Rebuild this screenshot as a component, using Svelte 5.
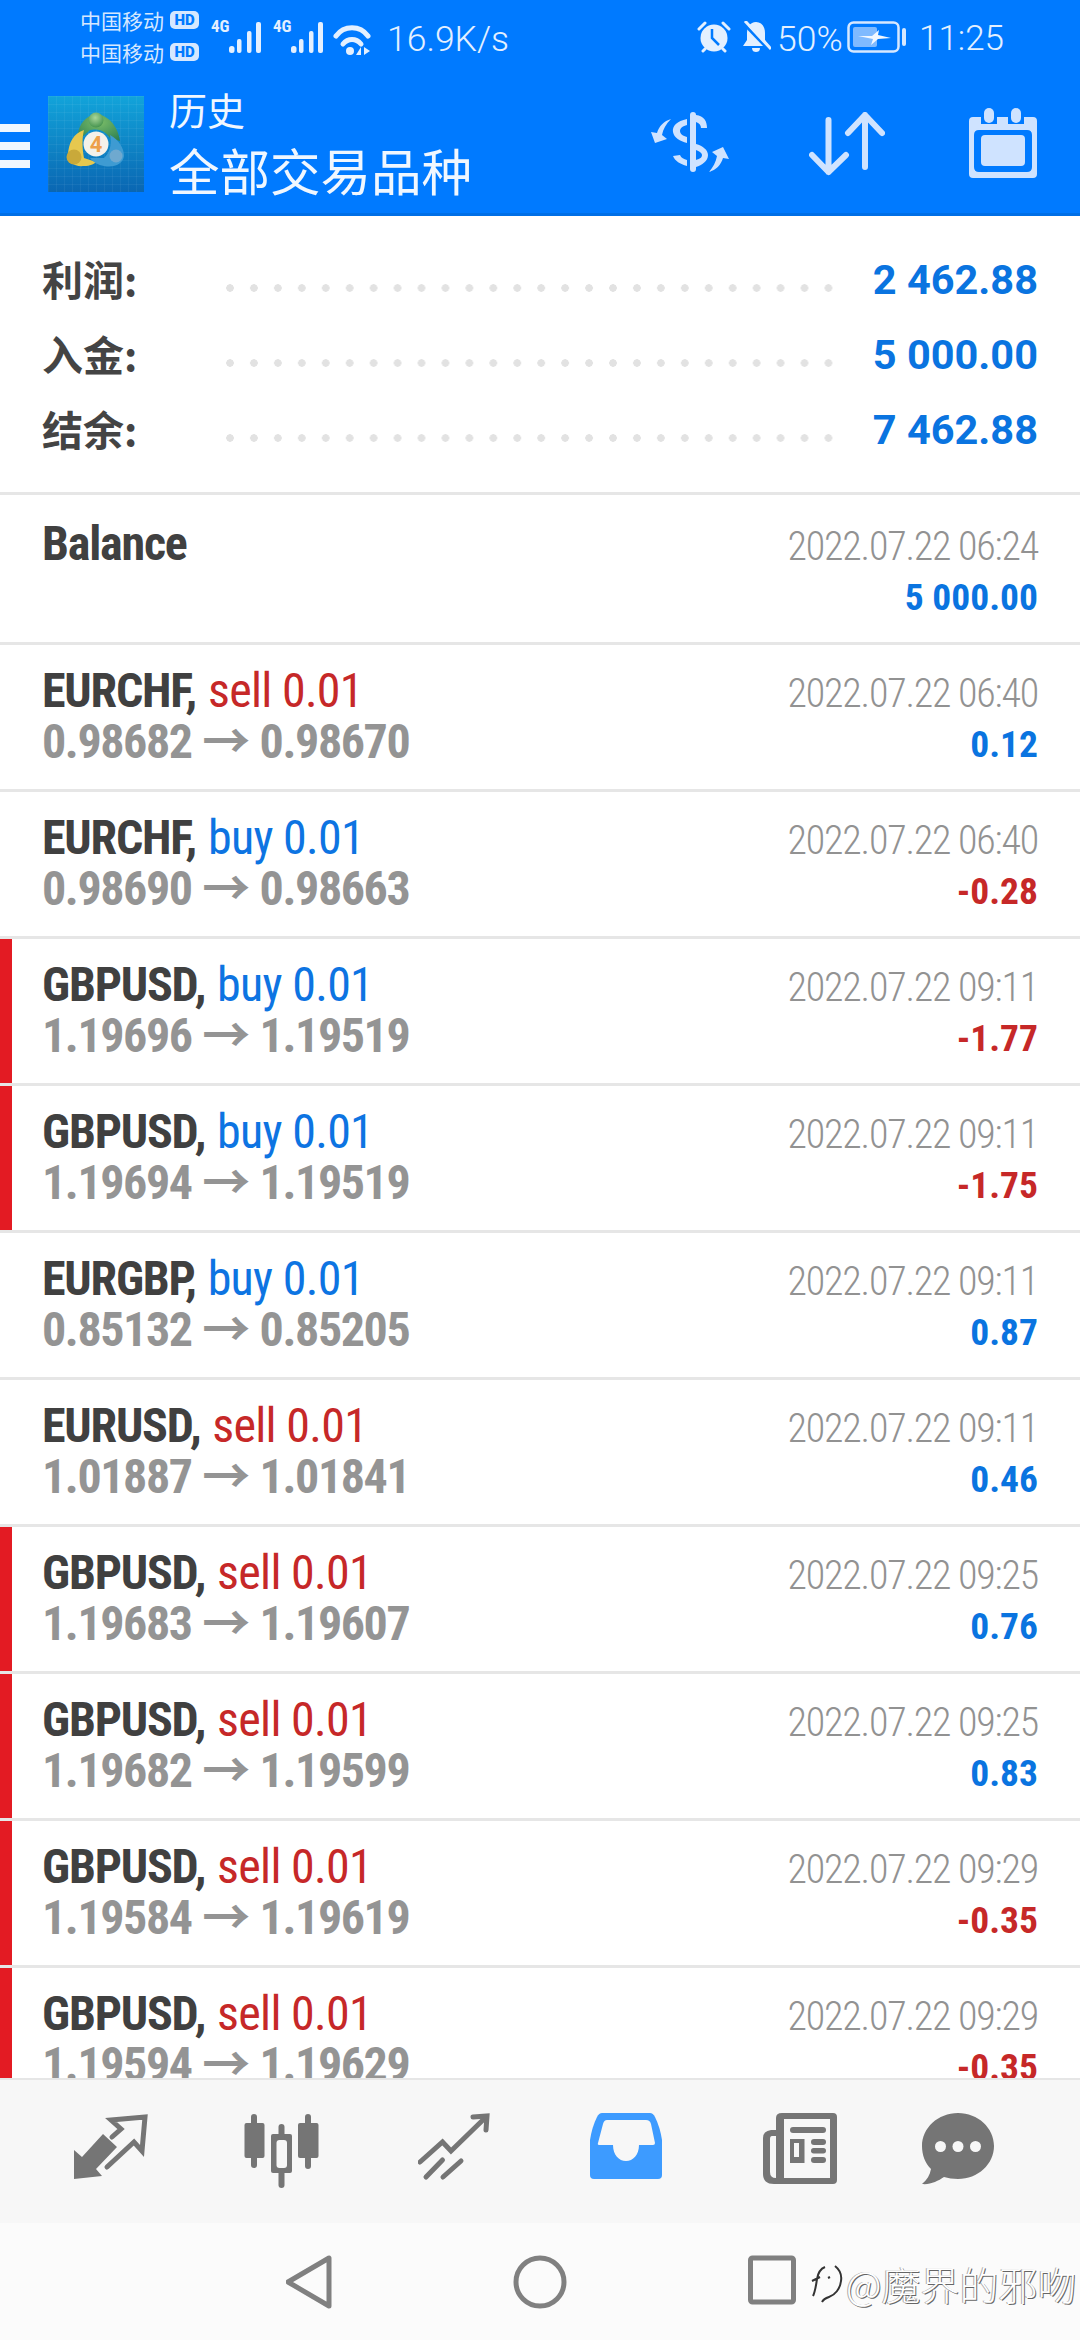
<script>
  const summary = [
    { label: '利润:', value: '2 462.88' },
    { label: '入金:', value: '5 000.00' },
    { label: '结余:', value: '7 462.88' }
  ];

  const rows = [
    ['EURCHF', 'sell', '0.98682', '0.98670', '06:40', '0.12', false],
    ['EURCHF', 'buy', '0.98690', '0.98663', '06:40', '-0.28', false],
    ['GBPUSD', 'buy', '1.19696', '1.19519', '09:11', '-1.77', true],
    ['GBPUSD', 'buy', '1.19694', '1.19519', '09:11', '-1.75', true],
    ['EURGBP', 'buy', '0.85132', '0.85205', '09:11', '0.87', false],
    ['EURUSD', 'sell', '1.01887', '1.01841', '09:11', '0.46', false],
    ['GBPUSD', 'sell', '1.19683', '1.19607', '09:25', '0.76', true],
    ['GBPUSD', 'sell', '1.19682', '1.19599', '09:25', '0.83', true],
    ['GBPUSD', 'sell', '1.19584', '1.19619', '09:29', '-0.35', true],
    ['GBPUSD', 'sell', '1.19594', '1.19629', '09:29', '-0.35', true]
  ];
</script>

<div class="phone">
  <header class="header">
    <div class="status">
      <div class="carriers">
        <div class="carrier">中国移动<span class="hd">HD</span></div>
        <div class="carrier">中国移动<span class="hd">HD</span></div>
      </div>
      {#each [0, 1] as s}
        <span class="net">4G</span>
        <svg class="signal" width="33" height="32" viewBox="0 0 33 32">
          <rect x="0" y="24" width="5.500" height="7" rx="2.500" />
          <rect x="8" y="17" width="4.500" height="14" rx="2" />
          <rect x="18" y="9" width="4.500" height="22" rx="2" />
          <rect x="27" y="0" width="5" height="31" rx="2" />
        </svg>
      {/each}
      <svg class="wifi" width="38" height="34" viewBox="0 0 38 34">
        <path d="M3 14 C11 3 27 3 35 14" />
        <path d="M10 22 C15 16 23 16 28 22" />
        <circle class="solid" cx="17" cy="29" r="4" />
        <path class="solid" d="M28 25 V33 L23 33 Z M31 25 V33 L37 29 Z" />
      </svg>
      <span class="speed">16.9K/s</span>
      <svg class="alarm" width="34" height="34" viewBox="0 0 34 34">
        <circle cx="17" cy="18" r="13.500" class="face" />
        <path class="hand" d="M15 9 V18 L22 25" />
        <path class="ear" d="M2 9 L8 3 M32 9 L26 3 M6 31 L8 29 M28 31 L26 29" />
      </svg>
      <svg class="bell" width="30" height="32" viewBox="0 0 30 32">
        <path class="face" d="M15 1 C21 1 24 6 24 12 V19 L28 25 H2 L6 19 V12 C6 6 9 1 15 1 Z" />
        <path class="face" d="M11 27 H19 C19 30 17 31 15 31 C13 31 11 30 11 27 Z" />
        <path class="gap" d="M2 2 L29 30" />
        <path class="slash" d="M4 0 L30 28" />
      </svg>
      <span class="pct">50%</span>
      <svg class="battery" width="60" height="33" viewBox="0 0 60 33">
        <rect x="1.500" y="1.500" width="50" height="29" rx="5" class="shell" />
        <rect x="6" y="6" width="24" height="20" rx="2" class="level" />
        <path class="bolt" d="M11 15 L25 15 L32 9 L31 14 L44 17 L31 18 L24 24 L26 18 Z" />
        <rect x="55" y="7" width="4" height="18" rx="2" class="nub" />
      </svg>
      <span class="clock">11:25</span>
    </div>

    <div class="toolbar">
      <div class="menu"><i></i><i></i><i></i></div>
      <svg class="logo" width="96" height="96" viewBox="0 0 96 96">
        <defs>
          <linearGradient id="sky" x1="0" y1="0" x2="0" y2="1">
            <stop offset="0" stop-color="#12a4da" />
            <stop offset="1" stop-color="#0a66b2" />
          </linearGradient>
          <pattern id="grid" width="8" height="8" patternUnits="userSpaceOnUse">
            <path d="M8 0 H0 V8" fill="none" stroke="#ffffff" stroke-opacity="0.1" stroke-width="1" />
          </pattern>
          <radialGradient id="leaf-g" cx="0.5" cy="0.3" r="0.8">
            <stop offset="0" stop-color="#7bbd68" />
            <stop offset="1" stop-color="#2c7f52" />
          </radialGradient>
          <radialGradient id="ball-g" cx="0.45" cy="0.35" r="0.7">
            <stop offset="0" stop-color="#a9d79a" />
            <stop offset="1" stop-color="#3f8f4a" />
          </radialGradient>
        </defs>
        <rect width="96" height="96" fill="url(#sky)" />
        <rect width="96" height="96" fill="url(#grid)" />
        <path d="M48 18 C60 19 70 30 72 45 L62 42 C58 35 50 32 42 34 L33 42 L30 38 C31 28 38 20 48 18 Z" fill="url(#leaf-g)" />
        <circle cx="48" cy="24" r="7.500" fill="url(#ball-g)" />
        <path d="M36 34 C26 37 20 47 20 60 C20 66 26 71 36 70 C42 70 46 68 48 66 L36 62 C34 52 34 42 36 34 Z" fill="#e6c84f" />
        <circle cx="26" cy="61" r="7.500" fill="#c9a93a" />
        <path d="M62 39 C71 44 76 52 76 60 C75 68 66 72 56 70 C50 69 45 66 42 62 L56 62 C62 56 64 48 62 39 Z" fill="#3e9bd2" />
        <circle cx="68" cy="60" r="6.500" fill="#6fa9cf" />
        <circle cx="48" cy="48" r="12.500" fill="#f4f1ea" />
        <text x="48" y="56" class="logo-4">4</text>
      </svg>
      <div class="titles">
        <div class="title-top">历史</div>
        <div class="title-main">全部交易品种</div>
      </div>
      <svg class="swap" width="80" height="60" viewBox="0 0 80 60">
        <rect x="40" y="0" width="6" height="60" rx="3" />
        <path d="M46 3 C54 4 57 9 57 16 L51 16 C51 13 49 11 46 10 Z" />
        <path d="M37 7 C27 9 22 14 23 20 C24 26 30 29 37 31 L37 25 C33 24 30 22 30 19 C30 16 33 14 37 13 Z" />
        <path d="M46 32 C53 34 58 38 58 43 C58 49 52 53 46 55 L46 48 C49 47 52 46 52 43 C52 41 49 39 46 38 Z" />
        <path d="M37 54 C30 52 25 49 23 44 L30 43 C31 46 34 47 37 48 Z" />
        <path d="M21 7 C14 9 9 14 7 21 L1 20 L5 31 L17 27 L12 23 C13 17 16 12 21 7 Z" />
        <path d="M59 60 C66 58 71 53 73 46 L79 47 L73 35 L62 40 L67 44 C66 50 63 55 59 60 Z" />
      </svg>
      <svg class="sort" width="76" height="64" viewBox="808 112 76 64">
        <path d="M827.500 120 V172 M811 155 L827.500 172 L845 155" />
        <path d="M864 167 V115 M847 133 L864 115 L881 133" />
      </svg>
      <svg class="calendar" width="68" height="70" viewBox="968 108 68 70">
        <path class="frame" fill-rule="evenodd" d="M972 117 H1032 Q1036 117 1036 121 V174 Q1036 178 1032 178 H972 Q968 178 968 174 V121 Q968 117 972 117 Z M978 130 Q973 130 973 135 V167 Q973 172 978 172 H1026 Q1031 172 1031 167 V135 Q1031 130 1026 130 Z" />
        <rect class="frame" x="980" y="135" width="44" height="31" rx="4" />
        <rect class="peg-gap" x="980" y="115" width="16" height="9" />
        <rect class="peg-gap" x="1007" y="115" width="16" height="9" />
        <rect class="frame" x="983" y="108" width="10" height="15" rx="5" />
        <rect class="frame" x="1010" y="108" width="10" height="15" rx="5" />
      </svg>
    </div>
  </header>

  <main class="content">
    <section class="summary">
      {#each summary as item}
        <div class="sum-row">
          <span class="sum-label">{item.label}</span>
          <span class="dots"></span>
          <span class="sum-value">{item.value}</span>
        </div>
      {/each}
    </section>

    <div class="row head">
      <div class="left"><div class="sym">Balance</div></div>
      <div class="right">
        <div class="date">2022.07.22 06:24</div>
        <div class="val pos">5 000.00</div>
      </div>
    </div>

    {#each rows as [sym, side, from, to, time, val, flagged]}
      <div class="row" class:flagged>
        <div class="left">
          <div class="sym">{sym}, <span class={side}>{side} 0.01</span></div>
          <div class="price">{from} → {to}</div>
        </div>
        <div class="right">
          <div class="date">2022.07.22 {time}</div>
          <div class="val" class:neg={val.startsWith('-')} class:pos={!val.startsWith('-')}>{val}</div>
        </div>
      </div>
    {/each}
  </main>

  <nav class="tabs">
    <svg width="76" height="70" viewBox="72 2116 76 70">
      <path class="fill" d="M74 2182 V2153 L82 2160 L103 2137 L117 2150 L96 2172 L102 2179 Z" />
      <path class="line" d="M112 2140 L121 2132 L111 2123 L145 2120 L142 2154 L134 2145 L107 2170" />
    </svg>
    <svg width="76" height="76" viewBox="244 2112 76 76">
      <rect class="fill" x="244.500" y="2122" width="20" height="35" rx="2" />
      <rect class="fill" x="251" y="2113" width="6" height="54" rx="3" />
      <rect class="fill" x="271" y="2133" width="21" height="39" rx="2" />
      <rect class="fill" x="278.500" y="2123" width="6" height="64" rx="3" />
      <rect class="hole" x="276.500" y="2139" width="10.500" height="28" rx="3" />
      <rect class="fill" x="298" y="2122" width="20.500" height="35" rx="2" />
      <rect class="fill" x="305" y="2113" width="6" height="55" rx="3" />
    </svg>
    <svg class="t3" width="72" height="68" viewBox="418 2115 72 68">
      <path class="line" d="M420 2164 L442.500 2144 L451 2153 L486 2119" />
      <path class="line" d="M473 2119 L487 2118 L486 2132" />
      <path class="line" d="M426 2179 L442.500 2162 M443 2179 L461 2163" />
    </svg>
    <svg class="t4" width="72" height="66" viewBox="590 2116 72 66">
      <path class="active" d="M602 2116 H650 Q653 2116 655 2120 Q660 2130 662 2143 V2178 Q662 2182 658 2182 H594 Q590 2182 590 2178 V2143 Q592 2130 597 2120 Q599 2116 602 2116 Z" />
      <path class="hole" d="M607 2123 H646 Q650 2123 651 2127 L655 2146 Q655 2148 653 2148 H639 C639 2158 633 2164 626 2164 C619 2164 613 2158 613 2148 H600 Q597 2148 598 2146 L603 2127 Q604 2123 607 2123 Z" />
    </svg>
    <svg class="t5" width="74" height="72" viewBox="763 2113 74 72">
      <path class="fill" fill-rule="evenodd" d="M782 2113 H833 Q837 2113 837 2117 V2180 Q837 2184 833 2184 H774 Q763 2184 763 2174 V2138 Q763 2131 771 2130 L776 2130 V2118 Q776 2113 782 2113 Z M784 2119 V2178 H830 V2119 Z M776 2136 H772 Q770 2136 770 2139 V2172 Q770 2178 776 2178 Z" />
      <rect class="fill" x="790" y="2127" width="36" height="6" rx="3" />
      <path class="fill" fill-rule="evenodd" d="M790 2139 H804.500 V2163 H790 Z M794 2143 V2157 H799 V2143 Z" />
      <rect class="fill" x="811" y="2139" width="15" height="6" rx="3" />
      <rect class="fill" x="811" y="2148" width="15" height="5.500" rx="2.700" />
      <rect class="fill" x="811" y="2157" width="15" height="6" rx="3" />
    </svg>
    <svg class="chat" width="74" height="72" viewBox="921 2113 74 72">
      <path class="fill" d="M958 2113 C978 2113 994 2128 994 2146 C994 2164 978 2179 958 2179 C953 2179 948 2178 944 2177 C938 2181 930 2185 922 2184 C927 2180 930 2175 931 2169 C925 2163 922 2155 922 2146 C922 2128 938 2113 958 2113 Z" />
      <circle class="hole" cx="940.500" cy="2146.500" r="5.500" />
      <circle class="hole" cx="958" cy="2146.500" r="5.500" />
      <circle class="hole" cx="975.500" cy="2146.500" r="5.500" />
    </svg>
  </nav>

  <footer class="sysnav">
    <svg width="46" height="54" viewBox="286 2255 46 54">
      <path d="M288 2282 L329 2258 V2306 Z" />
    </svg>
    <svg width="54" height="54" viewBox="513 2255 54 54">
      <circle cx="540" cy="2282" r="24" />
    </svg>
    <svg width="48" height="50" viewBox="745 2257 48 50">
      <rect x="747.500" y="2260" width="43" height="44" rx="2" />
    </svg>
    <div class="mark">
      <svg class="mark-logo" width="32" height="44" viewBox="0 0 32 44">
        <path d="M14 6 C9 8 7 12 6 18 C5 25 4 31 2 35 M1 20 L9 16 M24 5 C29 9 31 14 30 20 C29 28 24 34 18 36 C15 37 12 39 11 41 M17 17 L19 16" />
      </svg>
      <span>@魔界的邪吻</span>
    </div>
  </footer>
</div>

<style>
  :global(body) {
    margin: 0;
    background: #fff;
  }

  .phone {
    position: relative;
    width: 1080px;
    height: 2340px;
    display: flex;
    flex-direction: column;
    overflow: hidden;
    font-family: Roboto, "Noto Sans CJK SC", sans-serif;
  }

  .header {
    height: 213px;
    flex-shrink: 0;
    background: #007aff;
    border-bottom: 3px solid #006fe6;
    color: #fff;
  }

  .status {
    height: 70px;
    display: flex;
    align-items: center;
    padding-left: 80px;
    color: #e4f0ff;
  }

  .carriers {
    width: 131px;
    margin-top: 2px;
  }

  .carrier {
    display: flex;
    align-items: center;
    height: 32px;
    font-size: 21px;
    font-family: "Noto Sans CJK SC", sans-serif;
    color: #d6e8ff;
  }

  .hd {
    margin-left: 6px;
    width: 29px;
    height: 18px;
    line-height: 18px;
    border-radius: 5px;
    background: #d6e8ff;
    color: #007aff;
    font-family: Roboto, sans-serif;
    font-weight: 900;
    font-size: 15px;
    text-align: center;
  }

  .net {
    width: 18px;
    margin: -18px 0 0 0;
    font-size: 17px;
    font-weight: 700;
    font-stretch: 75%;
    color: #e4f0ff;
  }

  .signal {
    fill: #e4f0ff;
    margin: 6px 11px 0 0;
  }

  .wifi {
    margin: 8px 0 0 -2px;
    fill: none;
    stroke: #e4f0ff;
    stroke-width: 5;
    stroke-linecap: round;
  }

  .wifi .solid {
    fill: #e4f0ff;
    stroke: none;
  }

  .speed {
    margin-left: 16px;
    width: 310px;
    font-size: 35.500px;
    font-weight: 300;
    line-height: 40px;
    margin-top: 8px;
  }

  .alarm {
    margin-top: 4px;
  }

  .alarm .face,
  .bell .face {
    fill: #e4f0ff;
  }

  .alarm .hand {
    fill: none;
    stroke: #007aff;
    stroke-width: 2.500;
  }

  .alarm .ear {
    stroke: #e4f0ff;
    stroke-width: 3;
    stroke-linecap: round;
  }

  .bell {
    margin: 4px 0 0 10px;
  }

  .bell .gap {
    stroke: #007aff;
    stroke-width: 3;
  }

  .bell .slash {
    stroke: #e4f0ff;
    stroke-width: 3;
  }

  .pct {
    margin: 8px 0 0 6px;
    width: 70px;
    font-size: 35.500px;
    font-weight: 300;
    line-height: 40px;
  }

  .battery {
    margin-top: 5px;
  }

  .battery .shell {
    fill: none;
    stroke: #d6e8ff;
    stroke-width: 2.500;
  }

  .battery .level {
    fill: #7fbaff;
  }

  .battery .bolt {
    fill: #f2f8ff;
  }

  .battery .nub {
    fill: #d6e8ff;
  }

  .clock {
    margin: 8px 0 0 12px;
    font-size: 35px;
    font-weight: 300;
    line-height: 40px;
  }

  .toolbar {
    height: 143px;
    display: flex;
    align-items: center;
  }

  .menu {
    width: 30px;
    display: flex;
    flex-direction: column;
    gap: 10px;
    margin-top: 9px;
  }

  .menu i {
    display: block;
    height: 8px;
    background: #f0f7ff;
  }

  .logo {
    margin: 5px 0 0 18px;
  }

  .titles {
    margin: -1px 0 0 25px;
    width: 481px;
    font-family: "Noto Sans CJK SC", sans-serif;
    color: #f0f7ff;
  }

  .title-top {
    font-size: 38px;
    line-height: 56px;
  }

  .title-main {
    font-size: 50.500px;
    line-height: 64px;
  }

  .logo-4 {
    font-size: 22px;
    font-weight: 700;
    fill: #eda04a;
    text-anchor: middle;
  }

  .swap {
    fill: #cfe3ff;
    margin-top: 1px;
  }

  .sort {
    margin: 5px 0 0 79px;
    fill: none;
    stroke: #cfe3ff;
    stroke-width: 6;
    stroke-linecap: round;
    stroke-linejoin: round;
  }

  .calendar {
    margin: 3px 0 0 84px;
  }

  .calendar .frame {
    fill: #cfe3ff;
  }

  .calendar .peg-gap {
    fill: #007aff;
  }

  .content {
    flex: 1;
    min-height: 0;
    overflow: hidden;
  }

  .summary {
    height: 279px;
    box-sizing: border-box;
    border-bottom: 3px solid #e6e6e6;
    padding: 26px 42px 0 42px;
  }

  .sum-row {
    display: flex;
    align-items: center;
    height: 75px;
  }

  .sum-label {
    width: 184px;
    margin-top: -3px;
    font-family: "Noto Sans CJK SC", sans-serif;
    font-weight: 700;
    font-size: 41px;
    color: #444;
  }

  .dots {
    width: 607px;
    height: 8px;
    margin-top: 16px;
    background-image: radial-gradient(circle at 4px 4px, #e2e2e2 3.500px, transparent 4px);
    background-size: 23.950px 8px;
    background-repeat: repeat-x;
  }

  .sum-value {
    flex: 1;
    text-align: right;
    font-size: 41.500px;
    font-weight: 700;
    color: #0a74e0;
  }

  .row {
    position: relative;
    height: 147px;
    box-sizing: border-box;
    border-bottom: 3px solid #e6e6e6;
    display: flex;
    justify-content: space-between;
    padding: 20px 42px 0 42px;
    line-height: 51px;
  }

  .row.head {
    height: 150px;
    padding-top: 23px;
  }

  .row.flagged::before {
    content: "";
    position: absolute;
    left: 0;
    top: 0;
    bottom: 0;
    width: 12px;
    background: #e31b23;
  }

  .sym {
    font-size: 48px;
    font-weight: 700;
    font-stretch: 75%;
    letter-spacing: -1.200px;
    color: #404040;
  }

  .sell,
  .buy {
    margin-left: 2px;
    font-weight: 400;
    letter-spacing: -0.700px;
  }

  .sell {
    color: #c62828;
  }

  .buy {
    color: #0d74e2;
  }

  .price {
    font-size: 48px;
    font-weight: 700;
    font-stretch: 75%;
    letter-spacing: -1.400px;
    word-spacing: 1px;
    color: #949494;
  }

  .right {
    text-align: right;
    margin-top: 3px;
  }

  .date {
    font-size: 40px;
    font-weight: 300;
    font-stretch: 75%;
    letter-spacing: -1.200px;
    color: #929292;
  }

  .val {
    font-size: 37.500px;
    font-weight: 700;
    font-stretch: 75%;
    color: #0a74e0;
  }

  .val.neg {
    color: #c62828;
  }

  .tabs {
    height: 145px;
    flex-shrink: 0;
    box-sizing: border-box;
    border-top: 2px solid #e6e6e6;
    background: #f7f7f7;
    display: flex;
    align-items: flex-start;
    padding: 33px 0 0 72px;
    gap: 96px;
  }

  .tabs .fill {
    fill: #757575;
  }

  .tabs .line {
    fill: none;
    stroke: #757575;
    stroke-width: 5;
    stroke-linecap: round;
  }

  .tabs .hole {
    fill: #f7f7f7;
  }

  .tabs .active {
    fill: #3d9bff;
  }

  .t3 {
    margin-left: 2px;
  }

  .t4 {
    margin-left: 4px;
  }

  .t5 {
    margin-left: 5px;
  }

  .chat {
    margin-left: -12px;
  }

  .sysnav {
    position: relative;
    height: 117px;
    flex-shrink: 0;
    background: #fbfbfb;
    display: flex;
    align-items: flex-start;
    padding: 32px 0 0 286px;
    gap: 181px;
    box-sizing: border-box;
  }

  .sysnav > svg {
    fill: none;
    stroke: #808080;
    stroke-width: 5;
    stroke-linejoin: round;
  }

  .mark {
    position: absolute;
    left: 811px;
    top: 32px;
    display: flex;
    align-items: center;
    gap: 3px;
    font-family: "Noto Sans CJK SC", sans-serif;
    font-weight: 300;
    font-size: 39px;
    color: #fff;
    text-shadow: 1px 1px 0 #666, -1px 0 0 #aaa;
  }

  .mark-logo {
    fill: none;
    stroke: #333;
    stroke-width: 2;
  }
</style>
